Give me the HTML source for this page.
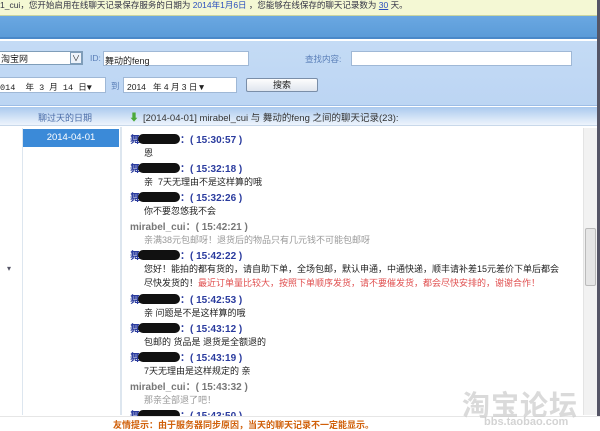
<!DOCTYPE html>
<html><head><meta charset="utf-8"><style>
*{margin:0;padding:0;box-sizing:border-box}
body{width:600px;height:430px;overflow:hidden;position:relative;background:#fff;font-family:"Liberation Sans","Noto Sans CJK SC",sans-serif;font-size:9px;color:#222}
.a{position:absolute;white-space:nowrap}
.inp{position:absolute;background:#fff;border:1px solid #9fb8d6}
.nm{position:absolute;left:130px;font-weight:bold;font-size:10px;color:#2a3b9e;white-space:nowrap}
.nm i{display:inline-block;width:42px;height:10px;background:#111;border-radius:5px;vertical-align:-1px;margin-left:-2px}
.tx{position:absolute;left:144px;font-size:9px;color:#222;white-space:nowrap}
</style></head><body>
<div class="a" style="left:0;top:0;width:600px;height:16px;background:#f4f8d4;border-bottom:1px solid #c9d6a0"></div>
<div class="a" style="left:0;top:0;font-size:8.5px;color:#334;line-height:10px">1_cui，您开始启用在线聊天记录保存服务的日期为 <span style="color:#2a4fbd">2014年1月6日</span> ，您能够在线保存的聊天记录数为 <u style="color:#2a4fbd">30</u> 天。</div>
<div class="a" style="left:0;top:16px;width:600px;height:23px;background:linear-gradient(#6aa8e2,#5b9bd8);border-bottom:2px solid #4a88c8"></div>
<div class="a" style="left:0;top:41px;width:600px;height:65px;background:linear-gradient(#c4dbf5,#bcd5f3);border-bottom:1px solid #9dbde6"></div>
<div class="inp" style="left:-2px;top:51px;width:85px;height:14px;border-color:#7f9db9"><span class="a" style="left:2px;top:0;font-size:9px">淘宝网</span><span class="a" style="right:0;top:0;width:12px;height:12px;border:1px solid #7f9db9;background:#eef3fa;font-size:8px;text-align:center;line-height:11px">∨</span></div>
<div class="a" style="left:90px;top:53px;color:#5a7fb8;font-size:8.5px">ID:</div>
<div class="inp" style="left:103px;top:51px;width:146px;height:15px"><span class="a" style="left:1px;top:2px;font-size:9px">舞动的feng</span></div>
<div class="a" style="left:305px;top:53px;color:#5a7fb8;font-size:8.5px">查找内容:</div>
<div class="inp" style="left:351px;top:51px;width:221px;height:15px"></div>
<div class="inp" style="left:-2px;top:77px;width:108px;height:16px;font-family:'Liberation Mono',monospace"><span class="a" style="left:1px;top:3px;font-size:8.5px">014 &nbsp;年 3 月 14 日▼</span></div>
<div class="a" style="left:111px;top:80px;color:#5a7fb8;font-size:8.5px">到</div>
<div class="inp" style="left:123px;top:77px;width:114px;height:16px"><span class="a" style="left:3px;top:3px;font-size:8.5px">2014 &nbsp;&nbsp;年 4 月 3 日▼</span></div>
<div class="a" style="left:246px;top:78px;width:72px;height:14px;border:1px solid #7a8ea8;border-radius:2px;background:linear-gradient(#fdfdfd,#dfe5ee);text-align:center;font-size:9px;line-height:12px">搜索</div>
<div class="a" style="left:0;top:107px;width:600px;height:19px;background:linear-gradient(#aac9ee,#dae8f8 70%,#eef4fc);border-bottom:1px solid #c8d8ea"></div>
<div class="a" style="left:38px;top:111px;color:#4a6ca8;font-size:9px">聊过天的日期</div>
<div class="a" style="left:129px;top:109px;color:#4caa3a;font-size:10px">⬇</div>
<div class="a" style="left:143px;top:110px;color:#333;font-size:9.5px">[2014-04-01] mirabel_cui 与 舞动的feng 之间的聊天记录(23):</div>
<div class="a" style="left:22px;top:128px;width:1px;height:287px;background:#dde6ef"></div>
<div class="a" style="left:120px;top:127px;width:2px;height:288px;background:#dde6ef"></div>
<div class="a" style="left:23px;top:129px;width:96px;height:18px;background:#3b8ad8;color:#fff;text-align:center;font-size:9.5px;line-height:18px">2014-04-01</div>
<div class="a" style="left:7px;top:264px;font-size:8px;color:#556">▾</div>
<div class="a" style="left:583px;top:128px;width:14px;height:287px;background:#f2f2f2;border-left:1px solid #e4e4e4"></div>
<div class="a" style="left:585px;top:228px;width:11px;height:58px;background:#e6e6e6;border:1px solid #bbb;border-radius:2px"></div>
<div class="a" style="left:597px;top:0;width:3px;height:430px;background:#556"></div>

<div class="nm" style="top:131px">舞<i></i>：( 15:30:57 )</div>
<div class="tx" style="top:146px">恩</div>
<div class="nm" style="top:160px">舞<i></i>：( 15:32:18 )</div>
<div class="tx" style="top:175px">亲&nbsp; 7天无理由不是这样算的哦</div>
<div class="nm" style="top:189px">舞<i></i>：( 15:32:26 )</div>
<div class="tx" style="top:204px">你不要忽悠我不会</div>
<div class="nm" style="top:218px;color:#777">mirabel_cui：( 15:42:21 )</div>
<div class="tx" style="top:233px;color:#999">亲满38元包邮呀！退货后的物品只有几元钱不可能包邮呀</div>
<div class="nm" style="top:247px">舞<i></i>：( 15:42:22 )</div>
<div class="tx" style="top:262px">您好！能拍的都有货的，请自助下单，全场包邮，默认申通，中通快递，顺丰请补差15元差价下单后都会</div>
<div class="tx" style="top:276px">尽快发货的！<span style="color:#e05050">最近订单量比较大，按照下单顺序发货，请不要催发货，都会尽快安排的，谢谢合作！</span></div>
<div class="nm" style="top:291px">舞<i></i>：( 15:42:53 )</div>
<div class="tx" style="top:306px">亲 问题是不是这样算的哦</div>
<div class="nm" style="top:320px">舞<i></i>：( 15:43:12 )</div>
<div class="tx" style="top:335px">包邮的 货品是 退货是全额退的</div>
<div class="nm" style="top:349px">舞<i></i>：( 15:43:19 )</div>
<div class="tx" style="top:364px">7天无理由是这样规定的 亲</div>
<div class="nm" style="top:378px;color:#777">mirabel_cui：( 15:43:32 )</div>
<div class="tx" style="top:393px;color:#999">那亲全部退了吧！</div>
<div class="nm" style="top:407px">舞<i></i>：( 15:43:50 )</div>
<div class="a" style="left:0;top:416px;width:600px;height:14px;background:#fff;border-top:1px solid #e6e6e6"></div>
<div class="a" style="left:113px;top:418px;color:#d0600a;font-weight:bold;font-size:9px">友情提示：由于服务器同步原因，当天的聊天记录不一定能显示。</div>
<div class="a" style="left:462px;top:384px;color:rgba(205,205,205,.75);font-size:28px;font-weight:bold;letter-spacing:1px">淘宝论坛</div>
<div class="a" style="left:484px;top:416px;color:rgba(200,200,200,.8);font-size:11px;font-weight:bold">bbs.taobao.com</div>
</body></html>
